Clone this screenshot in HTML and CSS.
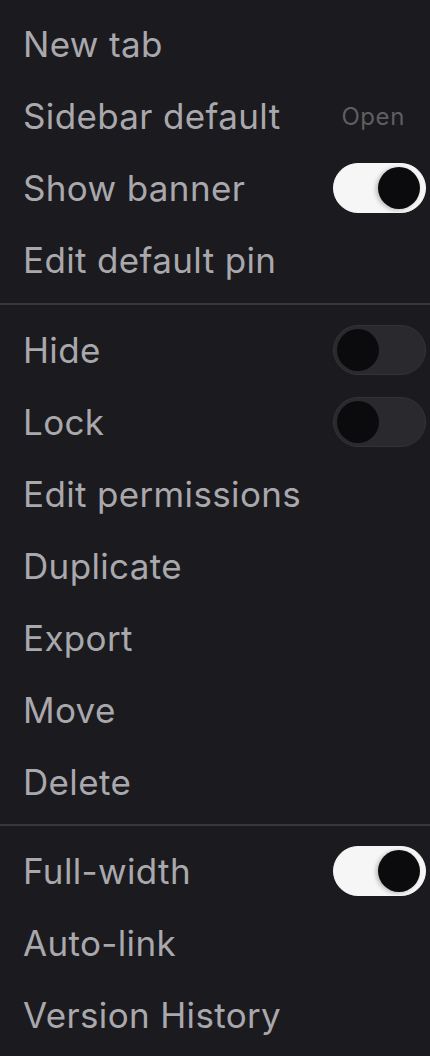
FILE: index.html
```html
<!DOCTYPE html>
<html lang="en">
<head>
    <meta charset="UTF-8">
    <meta name="viewport" content="width=device-width, initial-scale=1.0">
    <title>Page menu</title>
    <link rel="stylesheet" href="styles.css">
</head>
<body>
    <div class="menu">
        <div class="menu-section first">
            <div class="menu-item">New tab</div>
            <div class="menu-item">
                <span>Sidebar default</span>
                <span class="item-value">Open</span>
            </div>
            <div class="menu-item">
                <span>Show banner</span>
                <span class="switch on"><span class="knob"></span></span>
            </div>
            <div class="menu-item">Edit default pin</div>
        </div>

        <div class="menu-section">
            <div class="menu-item">
                <span>Hide</span>
                <span class="switch"><span class="knob"></span></span>
            </div>
            <div class="menu-item">
                <span>Lock</span>
                <span class="switch"><span class="knob"></span></span>
            </div>
            <div class="menu-item">Edit permissions</div>
            <div class="menu-item">Duplicate</div>
            <div class="menu-item">Export</div>
            <div class="menu-item">Move</div>
            <div class="menu-item">Delete</div>
        </div>

        <div class="menu-section last">
            <div class="menu-item">
                <span>Full-width</span>
                <span class="switch on"><span class="knob"></span></span>
            </div>
            <div class="menu-item">Auto-link</div>
            <div class="menu-item">Version History</div>
        </div>
    </div>
</body>
</html>
```

FILE: styles.css
```css
html, body {
    margin: 0;
    padding: 0;
    background-color: #1b1a1e;
}
body {
    font-family: Inter, "Noto Sans", sans-serif;
    color: #a9a8ad;
}
.menu {
    width: 430px;
    min-height: 1056px;
    background-color: #1b1a1e;
    border-radius: 0 0 14px 0;
    overflow: hidden;
}
.menu-section {
    padding: 9px 0 6px;
    border-bottom: 2px solid #38373b;
}
.menu-section.first {
    padding: 8px 0 7px;
}
.menu-section.last {
    border-bottom: none;
}
.menu-item {
    height: 72px;
    display: flex;
    align-items: center;
    justify-content: space-between;
    padding: 0 4px 0 23px;
    font-size: 35px;
    letter-spacing: 0.35px;
}
.item-value {
    font-size: 24px;
    letter-spacing: 0.6px;
    color: #5f5e63;
    margin-right: 21px;
}
.switch {
    width: 93px;
    height: 50px;
    box-sizing: border-box;
    border-radius: 25px;
    background-color: #2a292d;
    border: 1px solid #333236;
    display: flex;
    align-items: center;
    padding: 0 3px;
}
.switch .knob {
    width: 42px;
    height: 42px;
    border-radius: 50%;
    background-color: #0b0a0d;
}
.switch.on {
    background-color: #f6f6f6;
    border-color: #f6f6f6;
    justify-content: flex-end;
    padding: 0 5px;
}
.switch.on .knob {
    box-shadow: -2px 1px 4px rgba(0,0,0,0.25);
}
```
